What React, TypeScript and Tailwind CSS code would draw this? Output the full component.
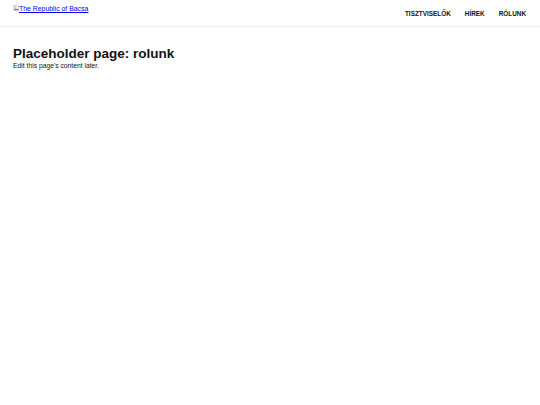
import React from 'react';

function BrokenImage() {
	return (
		<svg width="6" height="6" viewBox="0 0 14 14" className="inline-block align-baseline">
			<path d="M1 1h9l3 3v9H1z" fill="#f4f4f4" stroke="#9a9a9a" strokeWidth="1" />
			<path d="M2 12l4-5 3 3 2-2 2 4z" fill="#4caf50" />
			<circle cx="5" cy="4.5" r="1.3" fill="#5a9bd5" />
		</svg>
	);
}

export default function App() {
	const nav = ['TISZTVISELŐK', 'HÍREK', 'RÓLUNK'];
	return (
		<div className="min-h-screen w-full bg-white text-black" style={{ fontFamily: '"Liberation Sans", Arial, sans-serif' }}>
			<header className="h-[27px] w-full flex justify-between items-start pl-[13px] pr-[14px] border-b border-[#eeeeee]">
				<a href="#" className="pt-[4px] text-[6.9px] leading-normal text-[#0000ee] underline">
					<BrokenImage />
					The Republic of Bacsa
				</a>
				<nav className="flex gap-[14px] pt-[9px]">
					{nav.map((item) => (
						<a key={item} href="#" className="text-[6.4px] font-bold leading-normal text-[#111111]">{item}</a>
					))}
				</nav>
			</header>
			<main className="px-[13px] pt-[20px]">
				<h1 className="text-[13.5px] font-bold leading-[14px] text-[#111111]">Placeholder page: rolunk</h1>
				<p className="mt-[1px] text-[6.75px] leading-[8px] text-[#111111]">Edit this page's content later.</p>
			</main>
		</div>
	);
}
